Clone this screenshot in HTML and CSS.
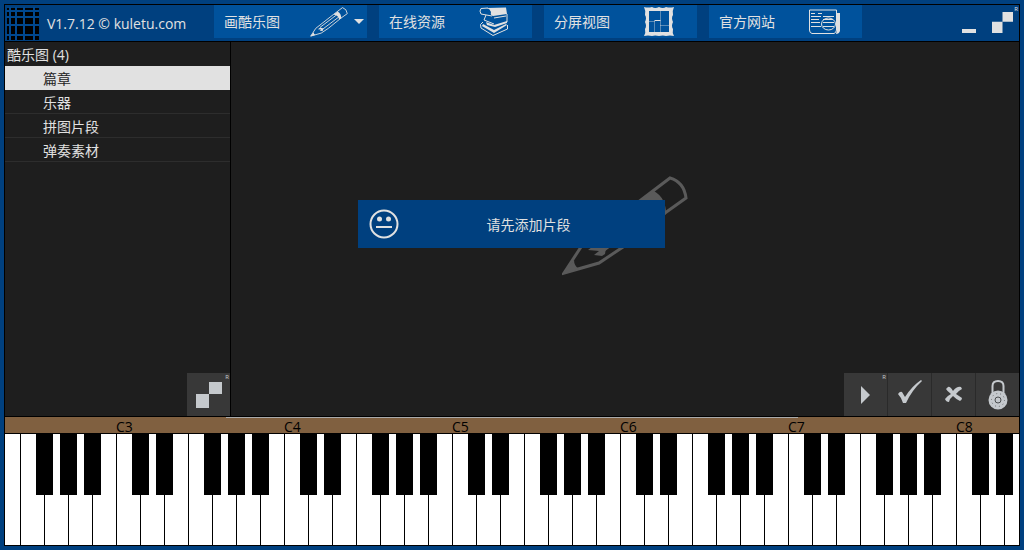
FILE: index.html
```html
<!DOCTYPE html>
<html lang="zh-CN">
<head>
  <meta charset="UTF-8">
  <meta name="viewport" content="width=device-width, initial-scale=1.0">
  <title>kuletu.com</title>
  <link rel="stylesheet" href="styles.css">
</head>
<body>
  <svg class="symbols" aria-hidden="true">
    <symbol id="pencil" viewBox="0 0 126 100">
      <path d="M2 97 L19 71 L79 24 L108 2 Q122 6 124 22 L103 37 L61 71 L37 87 Z" fill="none" stroke="currentColor" stroke-width="3"/>
      <path d="M78 25 L92 15 Q104 22 104 38 L97 42 Q95 29 78 25 Z M1 98 L12 84 Q12 90 17 93 Z" fill="currentColor"/>
      <path d="M33 68 L86 28 M42 74 L96 33" fill="none" stroke="currentColor" stroke-width="3"/>
      <path d="M26 74 L34 68 L44 72 L43 78 L40 80 L32 79 L37 75 Z" fill="currentColor"/>
    </symbol>
    <symbol id="blocks" viewBox="0 0 26 26">
      <path d="M0 12h13v14h-13z M13 0h13v12h-13z" fill="currentColor"/>
    </symbol>
  </svg>

  <div class="app">
    <header class="header">
      <div class="brand">
        <svg class="logo" width="33" height="33" viewBox="0 0 33 33">
          <path d="M1 1h32v32h-32z" fill="#000"/>
          <path d="M4 0v33 M10 0v33 M18 0v33 M28 0v33 M0 4h33 M0 10h33 M0 18h33 M0 28h33" stroke="#00488f" stroke-width="2"/>
        </svg>
        <span class="version">V1.7.12 © kuletu.com</span>
      </div>
      <nav class="menu">
        <button class="menu-item">
          <span class="menu-text">画酷乐图</span>
          <span class="menu-icon"><svg width="38" height="30"><use href="#pencil"/></svg></span>
          <span class="menu-arrow"><svg width="10" height="6" viewBox="0 0 10 6"><path d="M0 0h10l-5 5z" fill="currentColor"/></svg></span>
        </button>
        <button class="menu-item">
          <span class="menu-text">在线资源</span>
          <span class="menu-icon">
            <svg width="30" height="30" viewBox="0 0 30 30" fill="none" stroke="currentColor">
              <path d="M8 1 L27 0.500 L28 7 L14 9 Q11 8 12 5 Q11 2 8 1z M7 15 L15 18 L28 14 V16 L16 20 L8 18z M4 17 L15 23 L27 17 L28 18 L15 26 L3 19z" fill="currentColor" stroke="none"/>
              <path d="M9 1 L2 1.500 Q0 4 2 7 L13 9 M7 8 L5 13 L15 17 M15 11 L27 9 M28 7 L28 15 M4 15 Q0 17 2 21 L14 28.500 L28.500 22 V18"/>
            </svg>
          </span>
          <span class="menu-arrow"></span>
        </button>
        <button class="menu-item">
          <span class="menu-text">分屏视图</span>
          <span class="menu-icon">
            <svg width="30" height="30" viewBox="0 0 30 30">
              <path d="M0 0 Q4 1 8 0 Q11 2 15 0 Q19 2 22 0 Q26 1 30 0 Q28 4 29 8 Q27 11 29 15 Q27 19 29 22 Q28 26 30 29 Q26 28 22 29 Q19 28 15 29 Q11 28 8 29 Q4 28 0 29 Q2 26 1 22 Q3 19 1 15 Q3 11 1 8 Q2 4 0 0z M5 4 V25 H25 V4z" fill="currentColor" fill-rule="evenodd"/>
              <path d="M16.500 4v21 M10.500 14v11 M5 14.500h6 M16 18.500h9" fill="none" stroke="currentColor" opacity=".4"/>
              <path d="M10.500 13.500h6" fill="none" stroke="currentColor"/>
            </svg>
          </span>
          <span class="menu-arrow"></span>
        </button>
        <button class="menu-item">
          <span class="menu-text">官方网站</span>
          <span class="menu-icon">
            <svg width="32" height="26" viewBox="0 0 32 26" fill="none" stroke="currentColor">
              <path d="M1.500 1 H28.500 V21 Q28 24 26 24.500 H4 Q1.500 24 1.500 21z"/>
              <path d="M29 4h3v18q-1 3-4 3l1-4z" fill="currentColor" stroke="none"/>
              <path d="M3 4.500h4 M10 4.500h4 M3 7.500h10 M15 7.500h11 M3 10.500h8 M15 10.500h10 M3 13.500h9 M15 13.500h11 M3 17.500h10 M15 17.500h11"/>
              <ellipse cx="20.500" cy="15" rx="7" ry="6"/>
            </svg>
          </span>
          <span class="menu-arrow"></span>
        </button>
      </nav>
      <div class="window-buttons">
        <button class="win-btn" aria-label="最小化"><svg width="14" height="4"><path d="M0 0h14v4h-14z" fill="currentColor"/></svg></button>
        <button class="win-btn" aria-label="全屏"><svg width="21" height="21"><use href="#blocks"/></svg><span class="key-hint">R</span></button>
      </div>
    </header>

    <div class="workspace">
      <aside class="sidebar">
        <h2 class="list-title">酷乐图 (4)</h2>
        <ul class="list">
          <li class="list-item selected">篇章</li>
          <li class="list-item">乐器</li>
          <li class="list-item">拼图片段</li>
          <li class="list-item">弹奏素材</li>
        </ul>
        <div class="tools">
          <button class="tool" aria-label="展开"><svg width="26" height="26"><use href="#blocks"/></svg><span class="key-hint">R</span></button>
        </div>
      </aside>
      <main class="canvas">
        <svg class="watermark" width="126" height="100"><use href="#pencil"/></svg>
        <div class="tools">
          <button class="tool" aria-label="播放"><svg width="9" height="18" viewBox="0 0 9 18"><path d="M0 0l9 9-9 9z" fill="currentColor"/></svg><span class="key-hint">R</span></button>
          <button class="tool" aria-label="确定"><svg width="26" height="30" viewBox="0 0 26 30"><path d="M1 14 Q3 11 5 12 L8 17 Q15 6 24 0 L25 1 Q15 10 9 23 L6 23 Q4 17 1 14z" fill="currentColor"/></svg></button>
          <button class="tool" aria-label="删除"><svg width="18" height="18" viewBox="0 0 18 18"><path d="M3 1 Q5 0 8 5 Q12 0 16 1 L17 3 Q13 5 11 8 L17 12 Q17 14 15 15 Q12 14 8 10 Q5 12 4 16 Q1 16 0 13 Q2 10 6 8 Q2 5 1 3z" fill="currentColor"/></svg></button>
          <button class="tool" aria-label="锁定">
            <svg width="20" height="30" viewBox="0 0 20 30">
              <path d="M4.500 15 V6 Q4.500 1 10 1 Q15.500 1 15.500 6 V15" fill="none" stroke="currentColor" stroke-width="2"/>
              <circle cx="10" cy="20" r="9.500" fill="currentColor"/>
              <circle cx="10" cy="20" r="6.500" fill="none" stroke="#6b6e70" stroke-dasharray="1 3"/>
              <circle cx="10" cy="20" r="3" fill="none" stroke="#4b4e50"/>
            </svg>
          </button>
        </div>
      </main>
      <div class="toast" role="status">
        <svg class="toast-face" width="30" height="30" viewBox="0 0 30 30">
          <circle cx="15" cy="15" r="13.500" fill="none" stroke="currentColor" stroke-width="2"/>
          <circle cx="10.500" cy="10" r="2.500" fill="currentColor"/>
          <circle cx="19.500" cy="10" r="2.500" fill="currentColor"/>
          <path d="M7 18h16" stroke="currentColor" stroke-width="2"/>
        </svg>
        <span class="toast-text">请先添加片段</span>
      </div>
    </div>

    <div class="range">
      <div class="range-bar"></div>
      <div class="octaves">
        <span class="octave">C3</span>
        <span class="octave">C4</span>
        <span class="octave">C5</span>
        <span class="octave">C6</span>
        <span class="octave">C7</span>
        <span class="octave">C8</span>
      </div>
    </div>
    <div class="piano"></div>
  </div>

  <script src="piano.js"></script>
</body>
</html>
```
FILE: styles.css
```css
* {
  margin: 0;
  padding: 0;
  box-sizing: border-box;
}

body {
  height: 100vh;
  padding: 4px;
  background-color: #00407f;
  color: #e1e1e1;
  font-family: "Open Sans", "Noto Sans CJK SC", sans-serif;
  font-size: 14px;
  line-height: 24px;
}

button {
  border: none;
  color: inherit;
  font: inherit;
}

svg {
  display: block;
}

.symbols {
  position: absolute;
  width: 0;
  height: 0;
}

.app {
  height: 100%;
  display: flex;
  flex-direction: column;
  border: 1px solid #000;
  overflow: hidden;
}

/* header */
.header {
  flex: none;
  height: 37px;
  display: flex;
  border-bottom: 1px solid #000;
}

.brand {
  width: 209px;
  display: flex;
  align-items: center;
  gap: 8px;
  padding-left: 1px;
}

.version {
  padding-top: 1px;
  white-space: nowrap;
}

.menu {
  display: flex;
  align-items: flex-start;
  gap: 12px;
}

.menu-item {
  width: 153px;
  height: 33px;
  display: flex;
  align-items: center;
  padding-left: 10px;
  background-color: #00529c;
}

.menu-text {
  flex: 1;
  text-align: left;
}

.menu-icon {
  width: 44px;
  display: flex;
  justify-content: center;
}

.menu-arrow {
  width: 16px;
  display: flex;
  justify-content: center;
}

.window-buttons {
  margin-left: auto;
  display: flex;
}

.win-btn {
  position: relative;
  display: flex;
  align-items: flex-end;
  padding: 0 8px;
  padding-bottom: 8px;
  background: none;
}

.win-btn + .win-btn {
  padding-right: 6px;
}

.key-hint {
  position: absolute;
  top: 0;
  right: 1px;
  font-size: 6px;
  line-height: 8px;
}

/* workspace */
.workspace {
  position: relative;
  flex: 1;
  min-height: 0;
  display: flex;
  background-color: #1e1e1e;
}

.sidebar {
  width: 226px;
  display: flex;
  flex-direction: column;
  border-right: 1px solid #000;
}

.list-title {
  height: 24px;
  padding-top: 1px;
  padding-left: 2px;
  font-size: 14px;
  font-weight: normal;
}

.list {
  list-style: none;
}

.list-item {
  height: 24px;
  padding-top: 1px;
  padding-left: 38px;
  border-bottom: 1px solid #2d2d2d;
}

.list-item.selected {
  background-color: #e1e1e1;
  border-color: #e1e1e1;
  color: #1e1e1e;
}

.canvas {
  flex: 1;
  display: flex;
  flex-direction: column;
  align-items: center;
}

.watermark {
  margin-top: 134px;
  color: #5a5a5a;
}

.tools {
  margin-top: auto;
  align-self: flex-end;
  display: flex;
  gap: 1px;
  background-color: #2a2a2a;
}

.tool {
  position: relative;
  width: 43px;
  height: 43px;
  display: flex;
  align-items: center;
  justify-content: center;
  background-color: #383838;
  color: #c5c9cd;
}

.toast {
  position: absolute;
  top: 158px;
  left: 50%;
  width: 307px;
  height: 48px;
  margin-left: -154px;
  display: flex;
  align-items: center;
  padding: 0 11px;
  background-color: #00407f;
}

.toast-text {
  flex: 1;
  padding-top: 1px;
  padding-left: 4px;
  text-align: center;
}

/* piano */
.range {
  flex: none;
  height: 18px;
  border-top: 1px solid #000;
  border-bottom: 1px solid #000;
  background-color: #806040;
}

.range-bar {
  width: 572px;
  height: 1px;
  margin: 0 auto;
  background-color: #aaa;
}

.octaves {
  display: flex;
  padding-left: 111px;
  color: #000;
  line-height: 18px;
}

.octave {
  flex: none;
  width: 168px;
}

.octave:last-child {
  width: auto;
}

.piano {
  flex: none;
  height: 111px;
  display: flex;
  overflow: hidden;
}

.white-key {
  position: relative;
  flex: none;
  width: 24px;
  border-right: 1px solid #000;
  background-color: #fff;
}

/* the keyboard starts in the middle of E2 */
.white-key:first-child {
  width: 16px;
}

.black-key {
  position: absolute;
  z-index: 1;
  top: 0;
  left: -9px;
  width: 17px;
  height: 61px;
  background-color: #000;
}
```
FILE: piano.js
```javascript
const piano = document.querySelector('.piano');
const notes = ['C', 'D', 'E', 'F', 'G', 'A', 'B'];
// notes with a black key on their left side
const flats = ['D', 'E', 'G', 'A', 'B'];

function addKey(note, octave, first) {
  const key = document.createElement('div');
  key.className = 'white-key';
  key.title = note + octave;
  if (flats.includes(note) && !first) {
    const black = document.createElement('div');
    black.className = 'black-key';
    key.appendChild(black);
  }
  piano.appendChild(key);
}

// E2 to E8
for (let i = 2; i <= 44; i++) {
  addKey(notes[i % 7], 2 + Math.floor(i / 7), i === 2);
}
```
